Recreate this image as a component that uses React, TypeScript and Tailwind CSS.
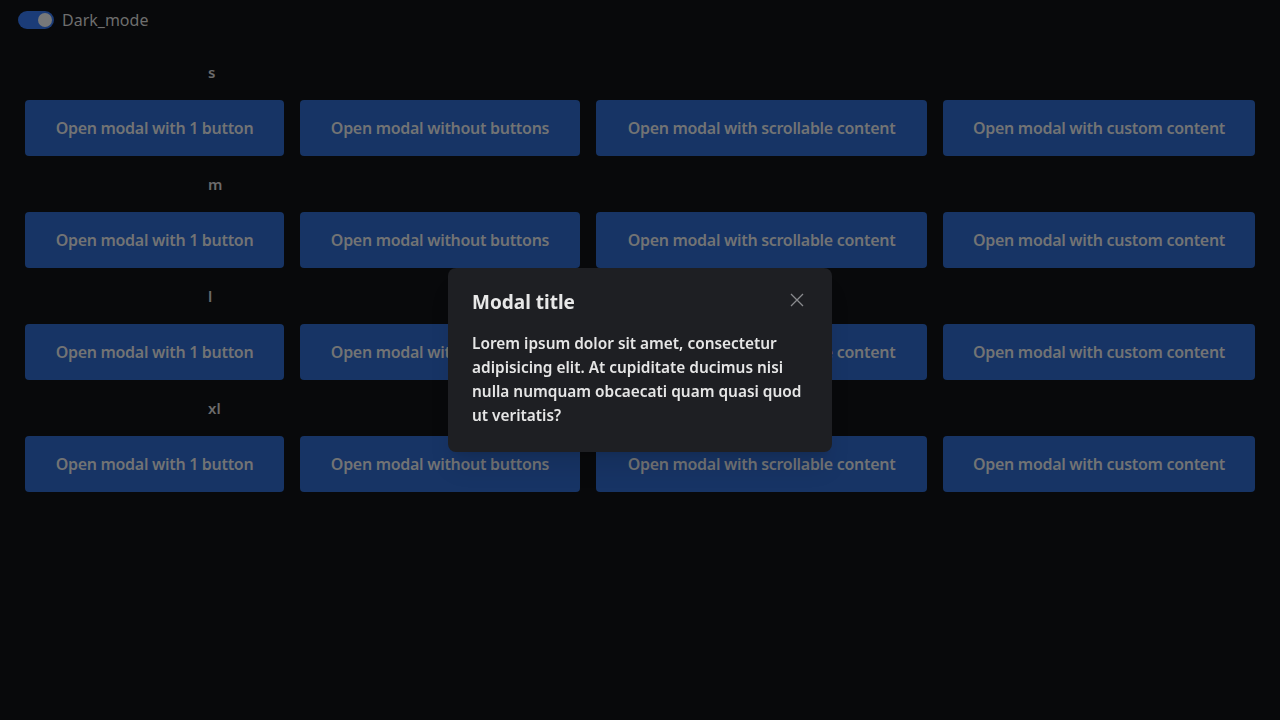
const sizes = ['s', 'm', 'l', 'xl']

const buttons = [
  { label: 'Open modal with 1 button', width: 'w-[259px]' },
  { label: 'Open modal without buttons', width: 'w-[280px]' },
  { label: 'Open modal with scrollable content', width: 'w-[331px]' },
  { label: 'Open modal with custom content', width: 'w-[312px]' },
]

export default function App() {
  return (
    <div className="min-h-[720px] bg-[#08090b] font-['Noto_Sans',sans-serif] relative">
      {/* Toggle */}
      <div className="flex items-center gap-2 pl-[18px] pt-[10px] h-[30px]">
        <div className="w-9 h-[18px] rounded-full bg-[#1b3c78] flex items-center justify-end px-[2px]">
          <div className="w-[14px] h-[14px] rounded-full bg-[#777879]" />
        </div>
        <span className="text-[16px] text-[#6e6e6e] leading-5">Dark_mode</span>
      </div>

      {/* Sections */}
      <div className="flex flex-col px-[25px] pt-[32px]">
        {sizes.map((size) => (
          <div key={size} className="flex flex-col">
            <div className="pl-[183px] h-[38px] text-[15px] font-semibold text-[#6b6b6b] leading-5">{size}</div>
            <div className="flex gap-4 mb-[18px]">
              {buttons.map((b) => (
                <button
                  key={b.label}
                  className={`${b.width} h-14 rounded-[4px] bg-[#173465] text-[#727374] text-[16px] font-semibold tracking-[-0.3px] flex items-center justify-center`}
                >
                  {b.label}
                </button>
              ))}
            </div>
          </div>
        ))}
      </div>

      {/* Modal */}
      <div className="fixed inset-0 flex items-center justify-center">
        <div className="w-[384px] bg-[#1e1f23] rounded-lg px-6 pt-[20px] pb-6 shadow-xl">
          <div className="flex items-center justify-between mb-4">
            <h2 className="text-[19px] font-bold text-[#e8e8e8] leading-7">Modal title</h2>
            <svg viewBox="0 0 14 14" className="w-[14px] h-[14px] mr-[4px] -mt-1 text-[#8a8b8e]" fill="none" stroke="currentColor" strokeWidth={1.3}>
              <path d="M1 1L13 13M13 1L1 13" />
            </svg>
          </div>
          <p className="text-[15.4px] font-semibold text-[#e6e6e6] leading-6">
            Lorem ipsum dolor sit amet, consectetur adipisicing elit. At cupiditate ducimus nisi nulla numquam obcaecati quam quasi quod ut veritatis?
          </p>
        </div>
      </div>
    </div>
  )
}
